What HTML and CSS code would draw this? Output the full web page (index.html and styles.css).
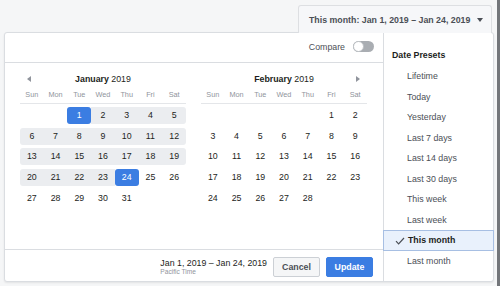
FILE: index.html
```html
<!DOCTYPE html>
<html lang="en">
<head>
	<meta charset="UTF-8">
	<meta name="viewport" content="width=device-width, initial-scale=1.0">
	<title>Date Range</title>
	<link rel="stylesheet" href="styles.css">
</head>
<body>
	<div class="topbar">
		<button class="range-btn">This month: Jan 1, 2019 – Jan 24, 2019 <span class="caret"></span></button>
	</div>
	<div class="panel">
		<div class="main">
			<div class="head">
				<span class="compare">Compare</span>
				<span class="toggle"><span class="knob"></span></span>
			</div>
			<div class="cals">
				<div class="month">
					<div class="month-title">
						<span class="nav"><span class="arrow prev"></span></span>
						<span class="title"><b>January</b> 2019</span>
						<span class="nav"></span>
					</div>
					<div class="weekdays">
						<span>Sun</span><span>Mon</span><span>Tue</span><span>Wed</span><span>Thu</span><span>Fri</span><span>Sat</span>
					</div>
					<div class="weeks">
						<div class="week">
							<span class="d"></span><span class="d"></span><span class="d sel">1</span><span class="d in">2</span><span class="d in">3</span><span class="d in">4</span><span class="d in">5</span>
						</div>
						<div class="week">
							<span class="d in">6</span><span class="d in">7</span><span class="d in">8</span><span class="d in">9</span><span class="d in">10</span><span class="d in">11</span><span class="d in">12</span>
						</div>
						<div class="week">
							<span class="d in">13</span><span class="d in">14</span><span class="d in">15</span><span class="d in">16</span><span class="d in">17</span><span class="d in">18</span><span class="d in">19</span>
						</div>
						<div class="week">
							<span class="d in">20</span><span class="d in">21</span><span class="d in">22</span><span class="d in">23</span><span class="d sel">24</span><span class="d">25</span><span class="d">26</span>
						</div>
						<div class="week">
							<span class="d">27</span><span class="d">28</span><span class="d">29</span><span class="d">30</span><span class="d">31</span><span class="d"></span><span class="d"></span>
						</div>
					</div>
				</div>
				<div class="month">
					<div class="month-title">
						<span class="nav"></span>
						<span class="title"><b>February</b> 2019</span>
						<span class="nav"><span class="arrow next"></span></span>
					</div>
					<div class="weekdays">
						<span>Sun</span><span>Mon</span><span>Tue</span><span>Wed</span><span>Thu</span><span>Fri</span><span>Sat</span>
					</div>
					<div class="weeks">
						<div class="week">
							<span class="d"></span><span class="d"></span><span class="d"></span><span class="d"></span><span class="d"></span><span class="d">1</span><span class="d">2</span>
						</div>
						<div class="week">
							<span class="d">3</span><span class="d">4</span><span class="d">5</span><span class="d">6</span><span class="d">7</span><span class="d">8</span><span class="d">9</span>
						</div>
						<div class="week">
							<span class="d">10</span><span class="d">11</span><span class="d">12</span><span class="d">13</span><span class="d">14</span><span class="d">15</span><span class="d">16</span>
						</div>
						<div class="week">
							<span class="d">17</span><span class="d">18</span><span class="d">19</span><span class="d">20</span><span class="d">21</span><span class="d">22</span><span class="d">23</span>
						</div>
						<div class="week">
							<span class="d">24</span><span class="d">25</span><span class="d">26</span><span class="d">27</span><span class="d">28</span><span class="d"></span><span class="d"></span>
						</div>
					</div>
				</div>
			</div>
			<div class="foot">
				<div class="picked">
					<div class="picked-range">Jan 1, 2019 – Jan 24, 2019</div>
					<div class="tz">Pacific Time</div>
				</div>
				<button class="btn cancel">Cancel</button>
				<button class="btn update">Update</button>
			</div>
		</div>
		<div class="presets">
			<div class="presets-title">Date Presets</div>
			<div class="preset">Lifetime</div>
			<div class="preset">Today</div>
			<div class="preset">Yesterday</div>
			<div class="preset">Last 7 days</div>
			<div class="preset">Last 14 days</div>
			<div class="preset">Last 30 days</div>
			<div class="preset">This week</div>
			<div class="preset">Last week</div>
			<div class="preset active">
				<svg class="check" width="10" height="8" viewBox="0 0 10 8"><polyline points="1,4.2 3.6,6.8 9,1" fill="none" stroke="#4b4f56" stroke-width="1.2"/></svg>
				This month
			</div>
			<div class="preset">Last month</div>
		</div>
	</div>
</body>
</html>
```

FILE: styles.css
```css
* {
	box-sizing: border-box;
}

body {
	margin: 0;
	width: 500px;
	height: 286px;
	overflow: hidden;
	font-family: "Liberation Sans", Arial, sans-serif;
	font-size: 8.8px;
	color: #1c1e21;
	background: #f5f6f7;
	border-right: 3px solid #73767a;
}

.topbar {
	display: flex;
	justify-content: flex-end;
	height: 33px;
	padding: 5px 5px 0 0;
}

.range-btn {
	position: relative;
	z-index: 1;
	display: flex;
	align-items: center;
	gap: 7px;
	width: 194px;
	height: 28px;
	padding: 0 0 0 10px;
	border: 1px solid #dddfe2;
	border-bottom: none;
	border-radius: 3px 3px 0 0;
	background: #f6f7f9;
	font-family: inherit;
	font-size: 8.8px;
	font-weight: bold;
	color: #4b4f56;
}

.caret {
	width: 0;
	height: 0;
	border-left: 3px solid transparent;
	border-right: 3px solid transparent;
	border-top: 4px solid #4b4f56;
}

.panel {
	display: flex;
	width: 490px;
	height: 250px;
	margin: -1px 0 0 4px;
	background: #fff;
	border: 1px solid #dadde1;
	border-radius: 3px;
	box-shadow: 0 1px 2px rgba(0, 0, 0, 0.08);
}

.main {
	flex: 1;
	display: flex;
	flex-direction: column;
}

.head {
	display: flex;
	justify-content: flex-end;
	align-items: center;
	gap: 8px;
	height: 30px;
	padding: 0 9px 2px 0;
	border-bottom: 1px solid #dadde1;
	color: #4b4f56;
}

.toggle {
	display: flex;
	align-items: center;
	width: 21px;
	height: 11px;
	border-radius: 6px;
	background: #a9adb2;
}

.knob {
	width: 11px;
	height: 11px;
	border-radius: 50%;
	background: #fff;
	border: 1px solid #bcc0c4;
}

.cals {
	flex: 1;
	display: flex;
	gap: 15px;
	padding: 7px 0 0 15px;
}

.month {
	width: 166px;
}

.month-title {
	display: flex;
	align-items: center;
	height: 18px;
	color: #1c1e21;
}

.nav {
	display: flex;
	justify-content: center;
	width: 18px;
}

.title {
	flex: 1;
	text-align: center;
}

.arrow {
	width: 0;
	height: 0;
	border-top: 3px solid transparent;
	border-bottom: 3px solid transparent;
}

.arrow.prev {
	border-right: 4px solid #90949c;
}

.arrow.next {
	border-left: 4px solid #90949c;
}

.weekdays {
	display: grid;
	grid-template-columns: repeat(7, 1fr);
	height: 16px;
	padding-bottom: 2px;
	border-bottom: 1px solid #e4e6e9;
	font-size: 7.3px;
	color: #90949c;
	text-align: center;
	align-items: center;
}

.weeks {
	display: flex;
	flex-direction: column;
	gap: 3.7px;
	margin-top: 3px;
}

.week {
	display: grid;
	grid-template-columns: repeat(7, 1fr);
	height: 17px;
}

.d {
	line-height: 17px;
	text-align: center;
	color: #1c1e21;
}

.d.in {
	background: #ebedf0;
}

.d.in:first-child {
	border-radius: 3px 0 0 3px;
}

.d.in:last-child {
	border-radius: 0 3px 3px 0;
}

.d.sel {
	background: #3b7de2;
	color: #fff;
	border-radius: 3px;
}

.foot {
	display: flex;
	justify-content: flex-end;
	align-items: center;
	gap: 6px;
	height: 32px;
	padding: 3px 10px 0 0;
	border-top: 1px solid #dadde1;
}

.picked-range {
	line-height: 10px;
	color: #1c1e21;
}

.tz {
	line-height: 8px;
	font-size: 6.6px;
	color: #90949c;
}

.btn {
	width: 47px;
	height: 20px;
	padding: 0;
	border-radius: 2px;
	font-family: inherit;
	font-size: 8.8px;
	font-weight: bold;
}

.cancel {
	background: #f5f6f7;
	border: 1px solid #ccd0d5;
	color: #4b4f56;
}

.update {
	background: #3b7de2;
	border: 1px solid #3b7de2;
	color: #fff;
}

.presets {
	width: 110px;
	border-left: 1px solid #dadde1;
	padding-top: 13px;
}

.presets-title {
	height: 18px;
	line-height: 18px;
	padding-left: 8px;
	margin-bottom: 2px;
	font-weight: bold;
	color: #1c1e21;
}

.preset {
	display: flex;
	align-items: center;
	height: 20.5px;
	padding-left: 23px;
	color: #4b4f56;
}

.preset.active {
	position: relative;
	margin-left: -1px;
	margin-right: -1px;
	padding-left: 24px;
	background: #e9f1fc;
	border: 1px solid #a7bfe3;
	font-weight: bold;
	color: #1c1e21;
}

.check {
	position: absolute;
	left: 11px;
	top: 6px;
}
```
